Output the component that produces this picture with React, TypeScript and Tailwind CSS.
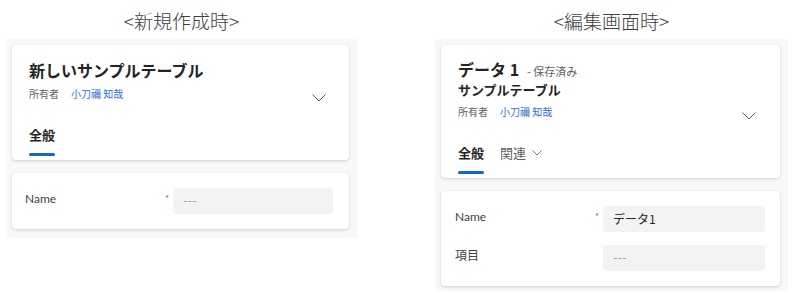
import { ReactNode } from "react"

const jp = "font-['Noto_Sans_CJK_JP',sans-serif]"
const latin = "font-['Lato','Noto_Sans_CJK_JP',sans-serif]"

const Chevron = ({ small }: { small?: boolean }) =>
  small ? (
    <svg width="10" height="6" viewBox="0 0 10 6" className="block">
      <polyline points="0.5,0.5 5,5 9.5,0.5" fill="none" stroke="#707070" strokeWidth="1" />
    </svg>
  ) : (
    <svg width="14" height="8" viewBox="0 0 14 8" className="block">
      <polyline points="0.5,0.5 7,7 13.5,0.5" fill="none" stroke="#616161" strokeWidth="1" />
    </svg>
  )

const Owner = () => (
  <div className="flex items-center gap-[12px] text-[10px] leading-[16px]">
    <span className="text-[#616161]">所有者</span>
    <span className="text-[#2a6ce0]">小刀禰 知哉</span>
  </div>
)

const Tabs = ({ related }: { related?: boolean }) => (
  <div className="mt-[23px] flex items-start gap-[16px] pb-[4px]">
    <div className="flex flex-col">
      <span className="text-[13px] leading-[20px] font-semibold text-[#242424]">全般</span>
      <div className="mt-[8px] h-[3px] rounded-full bg-[#0f6cbd]" />
    </div>
    {related && (
      <div className="flex items-center gap-[6px] text-[13px] leading-[20px] text-[#616161]">
        関連
        <Chevron small />
      </div>
    )}
  </div>
)

const Field = ({ label, value, required }: { label: string; value?: string; required?: boolean }) => (
  <div className="flex items-start">
    <div className="w-[148px] flex justify-between pt-[2px] pr-[4px]">
      <span className="text-[12px] leading-[18px] text-[#424242]">{label}</span>
      {required && <span className="text-[9px] leading-none pt-[4px] text-[#d13438]">*</span>}
    </div>
    <div
      className={`flex-1 h-[26px] rounded-[4px] bg-[#f3f3f3] px-[10px] text-[12px] leading-[26px] ${
        value ? `text-[#242424] ${jp}` : "text-[#9a9a9a]"
      }`}
    >
      {value ?? "---"}
    </div>
  </div>
)

const Card = ({ children, className }: { children: ReactNode; className?: string }) => (
  <div className={`rounded-[4px] bg-white shadow-[0_1px_3px_rgba(0,0,0,0.16),0_0_1px_rgba(0,0,0,0.1)] ${className ?? ""}`}>
    {children}
  </div>
)

const Column = ({ heading, width, pb, children }: { heading: string; width: string; pb: string; children: ReactNode }) => (
  <div className={width}>
    <div className={`h-[39px] pt-[9px] text-center text-[19px] leading-[24px] font-light text-[#404040] ${jp}`}>
      {heading}
    </div>
    <div className={`bg-[#f8f8f8] pt-[6px] pl-[6px] pr-[8px] flex flex-col gap-[13px] ${pb}`}>{children}</div>
  </div>
)

export default function App() {
  return (
    <div className={`w-[796px] h-[300px] bg-white flex pl-[6px] ${latin}`}>
      <Column heading="<新規作成時>" width="w-[351px]" pb="pb-[9px]">
        <Card className={`pt-[14px] pl-[17px] pr-[23px] ${jp}`}>
          <div className="flex items-end justify-between">
            <div>
              <div className="text-[16px] leading-[22px] font-bold text-[#242424]">新しいサンプルテーブル</div>
              <div className="mt-[5px]">
                <Owner />
              </div>
            </div>
            <Chevron />
          </div>
          <Tabs />
        </Card>
        <Card className="px-[13px] pr-[16px] py-[15px]">
          <Field label="Name" required />
        </Card>
      </Column>
      <div className="w-[78px]" />
      <Column heading="<編集画面時>" width="w-[353px]" pb="pb-[5px]">
        <Card className={`pt-[14px] pl-[17px] pr-[24px] ${jp}`}>
          <div className="flex items-end justify-between">
            <div>
              <div className="flex items-baseline gap-[8px] leading-[20px]">
                <span className="text-[16px] leading-[20px] font-bold text-[#242424]">データ 1</span>
                <span className="text-[11px] leading-[20px] text-[#616161]">- 保存済み</span>
              </div>
              <div className="text-[13px] leading-[18px] font-bold text-[#242424]">サンプルテーブル</div>
              <div className="mt-[5px]">
                <Owner />
              </div>
            </div>
            <Chevron />
          </div>
          <Tabs related />
        </Card>
        <Card className="pl-[14px] pr-[15px] py-[15px] flex flex-col gap-[13px]">
          <Field label="Name" value="データ1" required />
          <Field label="項目" />
        </Card>
      </Column>
    </div>
  )
}
